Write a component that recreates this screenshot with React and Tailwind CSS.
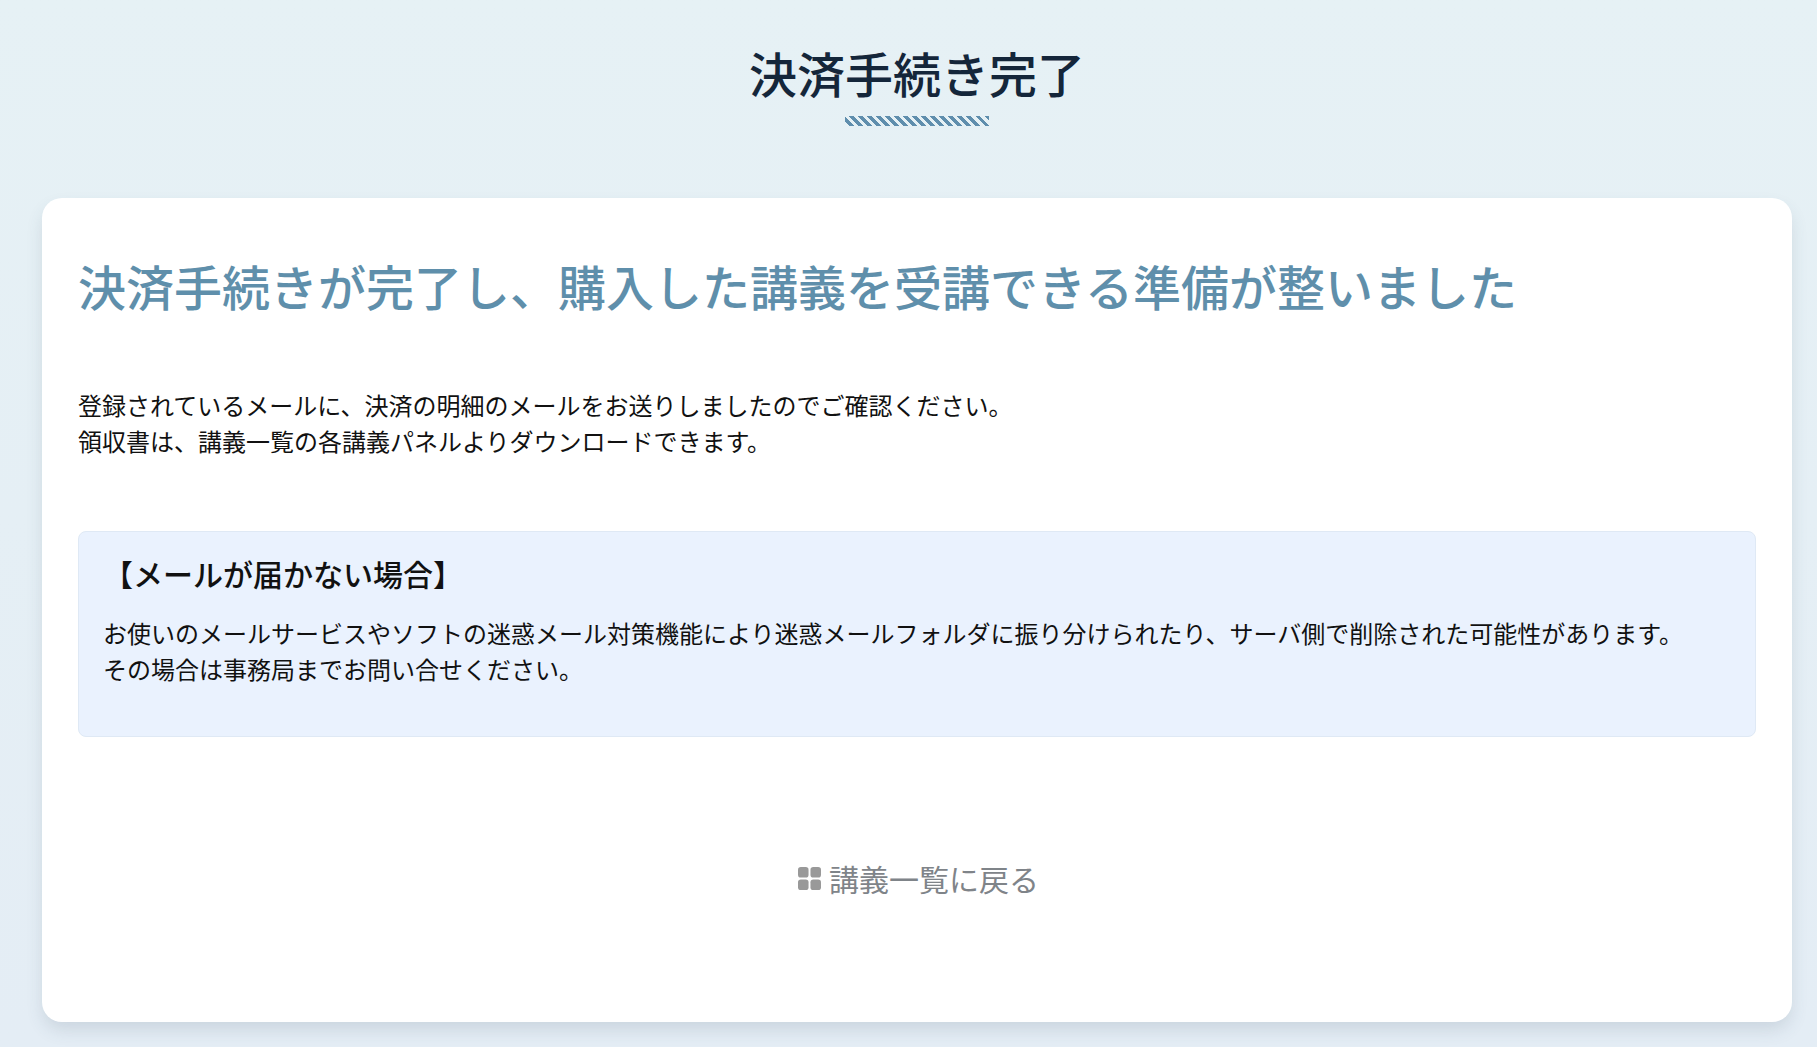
export default function App() {
  return (
    <div className="min-h-[1047px] bg-gradient-to-b from-[#e6f1f5] to-[#e4edf5] pl-[42px] pr-[25px] pt-[38px] pb-[25px] font-['Noto_Sans_CJK_JP','Noto_Sans',sans-serif]">
      <div className="flex flex-col items-center">
        <h1 className="text-[48px] leading-[68px] font-medium text-[#14263a]">決済手続き完了</h1>
        <div className="mt-[10px] h-[10px] w-[144px] bg-[repeating-linear-gradient(45deg,#e6f1f5_0,#e6f1f5_3px,#5f8ead_3px,#5f8ead_6.4px)]"></div>
      </div>
      <div className="mt-[72px] h-[824px] rounded-[20px] bg-white px-[36px] pt-[57px] shadow-[0_9px_18px_-2px_rgba(60,80,100,0.16)]">
        <h2 className="text-[48px] leading-[60px] font-medium text-[#5f8fab]">決済手続きが完了し、購入した講義を受講できる準備が整いました</h2>
        <p className="mt-[72px] text-[24px] leading-[36px] text-[#111]">
          登録されているメールに、決済の明細のメールをお送りしましたのでご確認ください。<br />
          領収書は、講義一覧の各講義パネルよりダウンロードできます。
        </p>
        <div className="mt-[72px] h-[206px] rounded-[8px] border border-[#dfe9f5] bg-[#eaf2fe] px-[24px] pt-[20px]">
          <h3 className="text-[30px] leading-[42px] font-medium text-[#111]">【メールが届かない場合】</h3>
          <p className="mt-[21px] text-[24px] leading-[36px] text-[#111]">
            お使いのメールサービスやソフトの迷惑メール対策機能により迷惑メールフォルダに振り分けられたり、サーバ側で削除された可能性があります。<br />
            その場合は事務局までお問い合せください。
          </p>
        </div>
        <div className="mt-[120px] flex items-center justify-center gap-[8px] pl-[3px] text-[30px] leading-[42px] text-[#7f8489]">
          <svg width="23" height="23" viewBox="0 0 24 24" className="fill-[#999]">
            <rect x="0" y="0" width="11" height="11" rx="3" />
            <rect x="13" y="0" width="11" height="11" rx="3" />
            <rect x="0" y="13" width="11" height="11" rx="3" />
            <rect x="13" y="13" width="11" height="11" rx="3" />
          </svg>
          <span>講義一覧に戻る</span>
        </div>
      </div>
    </div>
  );
}
